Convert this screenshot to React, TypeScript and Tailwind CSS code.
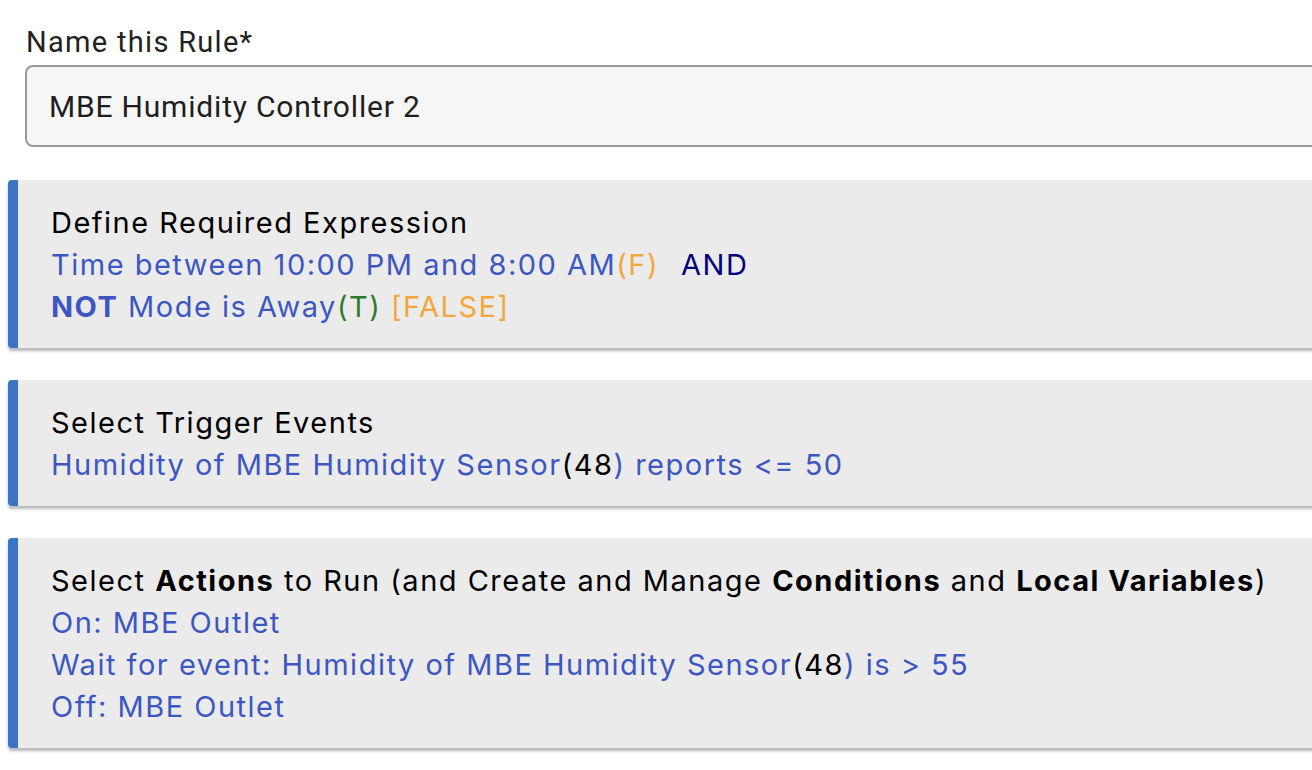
import React from "react";

const blue = "text-[#3c57c2]";

function Card({ children }: { children: React.ReactNode }) {
  return (
    <div className="flex rounded-[4px] bg-[#ebebeb] shadow-[0_3px_3px_rgba(0,0,0,0.28)] overflow-hidden">
      <div className="w-[10px] shrink-0 bg-[#3a75c5]" />
      <div className="pl-[33px] pt-[22px] pb-[20px] text-[29px] leading-[42px] tracking-[1.5px] text-black whitespace-nowrap">
        {children}
      </div>
    </div>
  );
}

export default function App() {
  return (
    <div className="w-screen h-screen overflow-hidden bg-white">
      <div className="w-[1400px] font-['Inter',sans-serif]">
        <div className="pl-[25px] pt-[22px]">
          <div className="pl-[1px] font-['Roboto',sans-serif] text-[29px] leading-[40px] tracking-[1.3px] text-[#222]">
            Name this Rule*
          </div>
          <div className="mt-[3px] h-[82px] rounded-[8px] border-2 border-[#999] bg-[#f6f6f6] flex items-center pl-[22px] font-['Roboto',sans-serif] text-[30px] tracking-[0.8px] text-[#1e1e1e]">
            MBE Humidity Controller 2
          </div>
        </div>
        <div className="pl-[8px] pt-[33px] flex flex-col gap-[32px]">
          <Card>
            <div>Define Required Expression</div>
            <div className={blue}>
              Time between 10:00 PM and 8:00 AM<span className="text-[#f5a73b]">(F)</span>
              <span className="ml-[22px] text-[#000080]">AND</span>
            </div>
            <div className={blue}>
              <span className="font-bold">NOT</span> Mode is Away<span className="text-[#2e7d2e]">(T)</span>{" "}
              <span className="text-[#f5a73b]">[FALSE]</span>
            </div>
          </Card>
          <Card>
            <div>Select Trigger Events</div>
            <div className={blue}>
              Humidity of MBE Humidity Sensor<span className="text-black">(48</span>) reports &lt;= 50
            </div>
          </Card>
          <Card>
            <div>
              Select <span className="font-bold">Actions</span> to Run (and Create and Manage{" "}
              <span className="font-bold">Conditions</span> and <span className="font-bold">Local Variables</span>)
            </div>
            <div className={blue}>On: MBE Outlet</div>
            <div className={blue}>
              Wait for event: Humidity of MBE Humidity Sensor<span className="text-black">(48</span>) is &gt; 55
            </div>
            <div className={blue}>Off: MBE Outlet</div>
          </Card>
        </div>
      </div>
    </div>
  );
}
